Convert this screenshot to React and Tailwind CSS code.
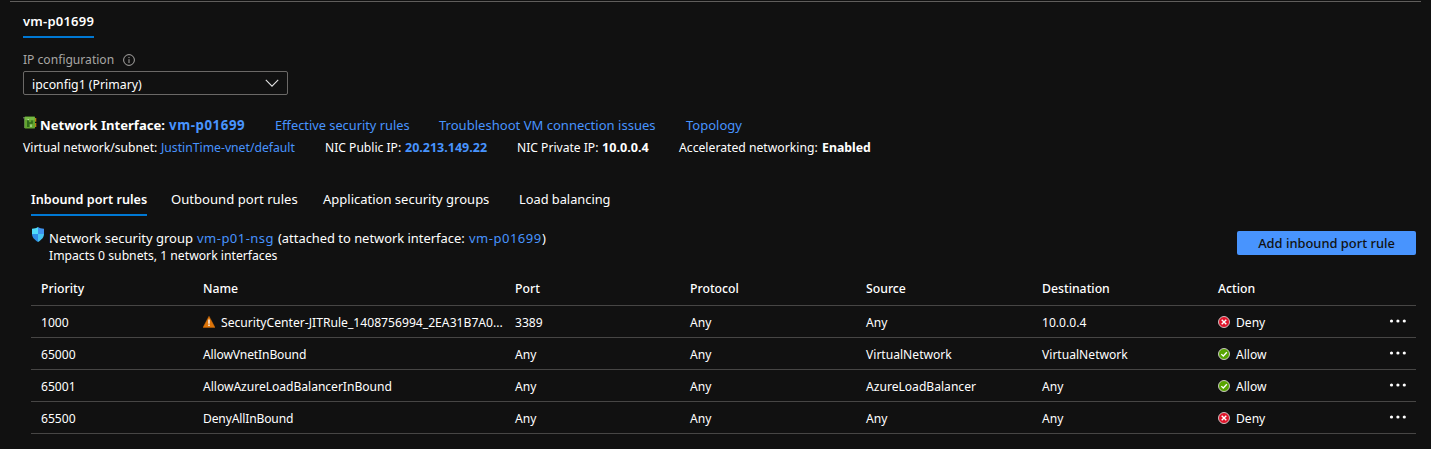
const COLS = "grid grid-cols-[162px_312px_175px_176px_176px_176px_1fr_27px] pl-[10px]";

const rules = [
  { priority: "1000", name: "SecurityCenter-JITRule_1408756994_2EA31B7A0...", warn: true, port: "3389", source: "Any", destination: "10.0.0.4", allow: false, nameClass: "text-[12.150px]" },
  { priority: "65000", name: "AllowVnetInBound", port: "Any", source: "VirtualNetwork", destination: "VirtualNetwork", allow: true, nameClass: "tracking-[-0.140px]" },
  { priority: "65001", name: "AllowAzureLoadBalancerInBound", port: "Any", source: "AzureLoadBalancer", destination: "Any", allow: true, nameClass: "tracking-[-0.030px]" },
  { priority: "65500", name: "DenyAllInBound", port: "Any", source: "Any", destination: "Any", allow: false, nameClass: "tracking-[-0.150px]" },
];

function InfoIcon() {
  return (
    <svg className="ml-[9px] size-3" viewBox="0 0 12 12" fill="none" stroke="#a8a6a4">
      <circle cx="6" cy="6" r="5.4" />
      <path d="M6 5.2V9M6 3v1.1" />
    </svg>
  );
}

function NicIcon() {
  return (
    <svg className="-mt-[8px] h-[13px] w-[14px]" viewBox="0 0 14 13">
      <path d="M.4 1h1.500v1.500H.4z" fill="#8d9488" />
      <path d="M1 1.500h1v10.500H1z" fill="#5c6b55" />
      <path d="M11.500 2h1.800v3.800h-1.800zM11.500 7h1.800v4h-1.800z" fill="#b9820e" />
      <rect x="1.600" y=".6" width="10.400" height="11.800" rx=".6" fill="#62a62f" />
      <path d="M2 1h9.600v3H2z" fill="#75b843" />
      <path d="M4 4h2v2.200h2.200V4.400h1.600v3.400H6.400V11H4z" fill="#2f6a1a" />
      <path d="M4.600 3h1.200v1.300H4.600zM7.400 8.400h1.200V11H7.400z" fill="#c5e3ad" />
    </svg>
  );
}

function ShieldIcon() {
  return (
    <svg className="mt-[5px] ml-px h-[15px] w-3" viewBox="0 0 12 15">
      <path d="M6 0c1.6 1.2 3.400 1.600 6 1.700V7H6z" fill="#3f92ee" />
      <path d="M6 0C4.400 1.200 2.600 1.600 0 1.700V7h6z" fill="#50dcfa" />
      <path d="M0 7h6v8C2.500 12.700 0 10.400 0 7z" fill="#2e8de6" />
      <path d="M12 7H6v8c3.500-2.300 6-4.600 6-8z" fill="#45c4f2" />
    </svg>
  );
}

function WarnIcon() {
  return (
    <svg className="-mt-px mr-[6px] size-3 shrink-0" viewBox="0 0 12 12">
      <path d="M6 .2 12 11.400H0z" fill="#dd7409" stroke="#dd7409" strokeWidth=".4" strokeLinejoin="round" />
      <path d="M5.300 3.600h1.400v4.200H5.300zM5.300 8.600h1.400v1.400H5.300z" fill="#fff" />
    </svg>
  );
}

function StatusIcon({ allow }) {
  return (
    <svg className="-mt-px mr-[6px] size-3 shrink-0" viewBox="0 0 12 12" fill="none">
      <circle cx="6" cy="6" r="5.500" fill={allow ? "#57a300" : "#e0142a"} stroke="#d8d4d2" strokeWidth=".9" />
      {allow ? (
        <path d="M3.300 6.100 5.300 8l3.500-3.700" stroke="#fff" strokeWidth="1.300" />
      ) : (
        <path d="m3.700 3.700 4.600 4.600M8.300 3.700 3.700 8.300" stroke="#fff" strokeWidth="1.400" />
      )}
    </svg>
  );
}

function Dots() {
  return (
    <svg className="-mt-[5px] h-1 w-[17px]" viewBox="0 0 17 4" fill="#fff">
      <circle cx="2.500" cy="2" r="1.600" />
      <circle cx="8.900" cy="2" r="1.600" />
      <circle cx="15.300" cy="2" r="1.600" />
    </svg>
  );
}

export default function App() {
  return (
    <div className="flex h-[449px] w-[1431px] flex-col overflow-hidden bg-[#111111] pt-px font-['Noto_Sans','Open_Sans',sans-serif] text-[12.1px] whitespace-nowrap text-white">
      <div className="mx-[10px] h-px shrink-0 bg-[#605e5c]" />

      <div className="ml-[23px] flex h-9 w-[71px] shrink-0 items-end border-b-2 border-[#0078d4] pb-[5px] text-[13px] leading-[20px] font-semibold tracking-[0.22px]">
        vm-p01699
      </div>

      <div className="mt-[12px] ml-[23px] flex h-5 shrink-0 items-center text-[#a8a6a4]">
        IP configuration
        <InfoIcon />
      </div>
      <div className="mt-px ml-[23px] flex h-6 w-[265px] shrink-0 items-center justify-between rounded-[2px] border border-[#6b6967] pt-[4px] pr-[8px] pl-[8px] text-[12.300px]">
        ipconfig1 (Primary)
        <svg className="-mt-[4px] h-2 w-[14px]" viewBox="0 0 14 8" fill="none" stroke="#e4e4e4" strokeWidth="1.100">
          <path d="M.8.900 7 7.100 13.200.900" />
        </svg>
      </div>

      <div className="mt-[21px] ml-[23px] flex h-5 shrink-0 items-center text-[13px]">
        <NicIcon />
        <div className="ml-[3px] w-[129px] text-[13.100px] font-bold">Network Interface:</div>
        <div className="w-[106px] text-[13.300px] font-bold tracking-[0.550px] text-[#4894fe]">vm-p01699</div>
        <div className="w-[164px] text-[12.800px] text-[#4894fe]">Effective security rules</div>
        <div className="w-[247px] text-[13.050px] text-[#4894fe]">Troubleshoot VM connection issues</div>
        <div className="text-[#4894fe]">Topology</div>
      </div>
      <div className="mt-[2px] ml-[23px] flex h-5 shrink-0 items-center">
        <div className="w-[138px]">Virtual network/subnet:</div>
        <div className="w-[164px] text-[12.200px] text-[#4894fe]">JustinTime-vnet/default</div>
        <div className="w-20">NIC Public IP:</div>
        <div className="w-[112px] text-[12.500px] font-bold text-[#4894fe]">20.213.149.22</div>
        <div className="w-[85px]">NIC Private IP:</div>
        <div className="w-[77px] text-[12.600px] font-bold">10.0.0.4</div>
        <div className="w-[143px] text-[12.200px]">Accelerated networking:</div>
        <div className="text-[12.300px] font-bold">Enabled</div>
      </div>

      <div className="mt-[30px] ml-[31px] flex h-[28px] shrink-0 text-[13px] leading-[22px]">
        <div className="mr-[24px] w-[116px] border-b-2 border-[#0078d4] text-[12.650px] font-semibold">Inbound port rules</div>
        <div className="w-[152px] text-[13.100px]">Outbound port rules</div>
        <div className="w-[196px]">Application security groups</div>
        <div className="text-[12.800px]">Load balancing</div>
      </div>

      <div className="mt-[6px] mr-[15px] ml-[31px] flex h-[52px] shrink-0 items-start">
        <ShieldIcon />
        <div className="ml-[5px] grow pt-[7px]">
          <div className="flex h-5 items-center text-[13px]">
            <span className="w-[148px]">Network security group</span>
            <span className="w-[81px] tracking-[0.480px] text-[#4894fe]">vm-p01-nsg</span>
            <span className="w-[191px] text-[12.900px]">(attached to network interface:</span>
            <span className="w-[73px] tracking-[0.500px] text-[#4894fe]">vm-p01699</span>
            <span>)</span>
          </div>
          <div className="-mt-px h-4 text-[12.200px] leading-[16px]">Impacts 0 subnets, 1 network interfaces</div>
        </div>
        <button className="mt-[9px] flex h-6 w-[179px] items-center justify-center rounded-[2px] bg-[#4894fe] pt-[2px] text-[12.900px] font-medium text-[#111111]">
          Add inbound port rule
        </button>
      </div>

      <div className="mr-[15px] ml-[31px] shrink-0">
        <div className={`${COLS} h-[32px] items-center border-b border-[#474645] text-[12.250px] font-[550]`}>
          <div>Priority</div>
          <div>Name</div>
          <div>Port</div>
          <div>Protocol</div>
          <div>Source</div>
          <div>Destination</div>
          <div>Action</div>
          <div />
        </div>
        {rules.map((r) => (
          <div key={r.priority} className={`${COLS} h-8 items-center border-b border-[#474645] pt-[3px]`}>
            <div>{r.priority}</div>
            <div className={`flex items-center ${r.nameClass}`}>
              {r.warn && <WarnIcon />}
              {r.name}
            </div>
            <div>{r.port}</div>
            <div>Any</div>
            <div>{r.source}</div>
            <div>{r.destination}</div>
            <div className="flex items-center">
              <StatusIcon allow={r.allow} />
              {r.allow ? "Allow" : "Deny"}
            </div>
            <Dots />
          </div>
        ))}
      </div>
    </div>
  );
}
